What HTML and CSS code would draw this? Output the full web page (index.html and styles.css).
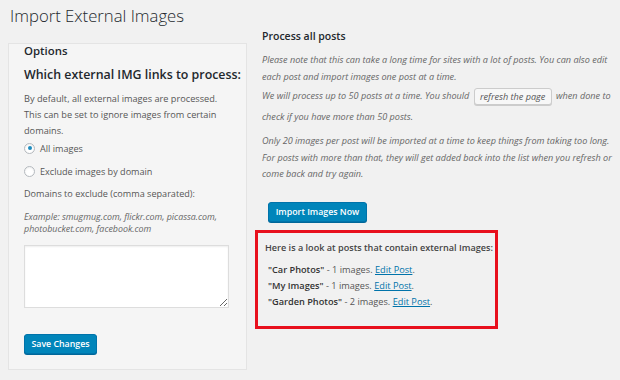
FILE: index.html
```html
<!DOCTYPE html>
<html lang="en">
<head>
    <meta charset="UTF-8">
    <title>Import External Images</title>
    <link rel="stylesheet" href="styles.css">
</head>
<body>
    <div class="wrap">
        <h1 class="page-title">Import External Images</h1>
        <div class="columns">
            <div class="options-panel">
                <h3>Options</h3>
                <h2>Which external IMG links to process:</h2>
                <p class="desc">By default, all external images are processed. This can be set to ignore images from certain domains.</p>
                <label class="radio first"><span class="dot checked"></span>All images</label>
                <label class="radio"><span class="dot"></span>Exclude images by domain</label>
                <p class="field-label">Domains to exclude (comma separated):</p>
                <p class="example">Example: smugmug.com, flickr.com, picassa.com, photobucket.com, facebook.com</p>
                <textarea class="domains"></textarea>
                <button class="btn-primary save">Save Changes</button>
            </div>
            <div class="process">
                <h3>Process all posts</h3>
                <p class="note">Please note that this can take a long time for sites with a lot of posts. You can also edit each post and import images one post at a time.</p>
                <p class="note tall">We will process up to 50 posts at a time. You should <button class="btn-secondary">refresh the page</button> when done to<br>check if you have more than 50 posts.</p>
                <p class="note last">Only 20 images per post will be imported at a time to keep things from taking too long. For posts with more than that, they will get added back into the list when you refresh or come back and try again.</p>
                <button class="btn-primary import">Import Images Now</button>
                <div class="results">
                    <p class="results-title">Here is a look at posts that contain external Images:</p>
                    <ul>
                        <li><b>"Car Photos"</b> - 1 images. <a href="#">Edit Post</a>.</li>
                        <li><b>"My Images"</b> - 1 images. <a href="#">Edit Post</a>.</li>
                        <li><b>"Garden Photos"</b> - 2 images. <a href="#">Edit Post</a>.</li>
                    </ul>
                </div>
            </div>
        </div>
    </div>
</body>
</html>
```

FILE: styles.css
```css
body, html {
    margin: 0;
    padding: 0;
}
body {
    background-color: #f1f1f1;
    font-family: "Open Sans", Arial, sans-serif;
    color: #444;
    width: 620px;
    height: 380px;
    overflow: hidden;
}
.wrap {
    padding-left: 8px;
}
.page-title {
    margin: 0;
    padding: 4px 0 0 2px;
    height: 24px;
    font-size: 16.7px;
    font-weight: 300;
    color: #23282d;
    line-height: 24px;
}
.columns {
    display: flex;
    gap: 15px;
}
.options-panel {
    width: 222px;
    height: 325px;
    margin-top: 15px;
    padding-left: 15px;
    background-color: #f5f5f5;
    border: 1px solid #e4e4e4;
    display: flex;
    flex-direction: column;
    align-items: flex-start;
}
.options-panel h3 {
    margin: 0;
    font-size: 11.4px;
    font-weight: 600;
    color: #23282d;
    line-height: 14px;
}
.options-panel h2 {
    margin: 8px 0 0;
    font-size: 12.4px;
    font-weight: 600;
    color: #23282d;
    line-height: 18px;
    white-space: nowrap;
}
.desc {
    margin: 7px 0 0;
    font-size: 9.2px;
    line-height: 16px;
    color: #555;
    width: 212px;
}
.radio {
    display: flex;
    align-items: center;
    gap: 5px;
    font-size: 9.1px;
    color: #555;
    height: 16px;
    margin-top: 7px;
}
.radio.first {
    margin-top: 1px;
}
.dot {
    width: 11px;
    height: 11px;
    border: 1px solid #b4b9be;
    border-radius: 50%;
    background-color: #fff;
    box-sizing: border-box;
    position: relative;
    box-shadow: inset 0 1px 2px rgba(0, 0, 0, 0.07);
}
.dot.checked::after {
    content: "";
    position: absolute;
    left: 2.5px;
    top: 2.5px;
    width: 4px;
    height: 4px;
    border-radius: 50%;
    background-color: #1e8cbe;
}
.field-label {
    margin: 7px 0 0;
    font-size: 9.1px;
    line-height: 16px;
    color: #555;
}
.example {
    margin: 9px 0 0;
    font-size: 8.9px;
    font-style: italic;
    line-height: 12px;
    color: #666;
    width: 210px;
}
.domains {
    margin: 10px 0 0;
    width: 205px;
    height: 63px;
    box-sizing: border-box;
    border: 1px solid #ddd;
    background-color: #fff;
    box-shadow: inset 0 1px 2px rgba(0, 0, 0, 0.07);
}
.btn-primary {
    font-family: "Open Sans", Arial, sans-serif;
    font-size: 8.8px;
    font-weight: 600;
    color: #fff;
    background-color: #0085ba;
    border: 1px solid #0073aa;
    border-radius: 3px;
    box-shadow: 0 1px 0 #006799;
    height: 20px;
    padding: 0;
    line-height: 18px;
    white-space: nowrap;
}
.save {
    margin-top: 26px;
    width: 73px;
}
.process {
    width: 350px;
}
.process h3 {
    margin: 1px 0 0;
    font-size: 10.5px;
    font-weight: 600;
    color: #23282d;
    line-height: 14px;
}
.note {
    margin: 8px 0 0;
    font-size: 9.1px;
    font-style: italic;
    line-height: 17px;
    color: #666;
}
.note.tall {
    line-height: 21px;
    margin-top: 0;
}
.note.last {
    line-height: 16.5px;
    margin-top: 6px;
}
.btn-secondary {
    font-family: "Open Sans", Arial, sans-serif;
    font-size: 9.1px;
    font-style: italic;
    color: #555;
    background-color: #f7f7f7;
    border: 1px solid #ccc;
    border-radius: 3px;
    box-shadow: 0 1px 0 #ccc;
    height: 17px;
    width: 78px;
    padding: 0;
    margin: 0 2px;
    vertical-align: middle;
}
.import {
    margin: 19px 0 0 6px;
    width: 99px;
}
.results {
    margin: 8px 0 0 -7px;
    width: 230px;
    height: 77px;
    border: 3px solid #e8101d;
    padding: 8px 0 8px 7px;
}
.results-title {
    margin: 0;
    font-size: 9.1px;
    font-weight: 600;
    color: #444;
    line-height: 14px;
    white-space: nowrap;
}
.results ul {
    list-style: none;
    margin: 7px 0 0;
    padding-left: 3px;
}
.results li {
    font-size: 9.2px;
    line-height: 16px;
    color: #555;
}
.results b {
    font-weight: 600;
    color: #333;
}
.results a {
    color: #0073aa;
}
```
